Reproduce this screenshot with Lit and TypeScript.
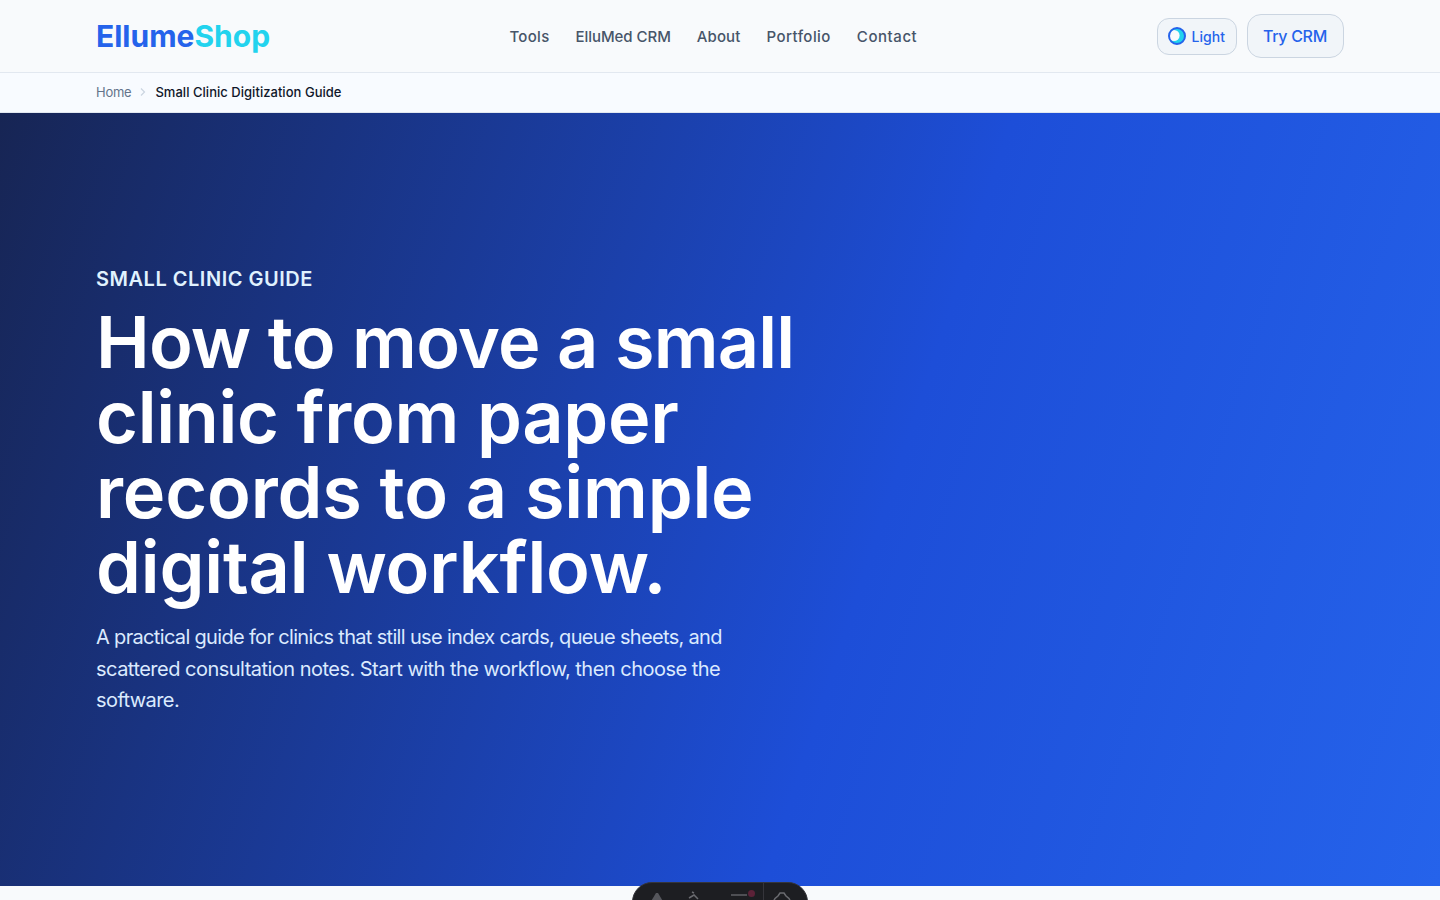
import { LitElement, html, css } from "lit";
import { customElement } from "lit/decorators.js";

@customElement("app-root")
export class AppRoot extends LitElement {
  static styles = css`
    :host { display: block; height: 900px; overflow: hidden; position: relative; background: #f8fafc; font-family: Inter, "Noto Sans", sans-serif; }
    .header { height: 73px; box-sizing: border-box; border-bottom: 1px solid #e2e8f0; padding: 0 96px; display: flex; justify-content: space-between; align-items: center; background: #f8fafc; }
    .logo { font-size: 30px; font-weight: 700; letter-spacing: 0; color: #2563eb; }
    .logo span { color: #22d3ee; }
    .nav { display: flex; gap: 26px; font-size: 15px; font-weight: 500; letter-spacing: 0.12px; color: #475569; }
    .nav span:nth-child(1) { letter-spacing: 0.3px; }
    .nav span:nth-child(2) { letter-spacing: -0.05px; }
    .nav span:nth-child(4) { letter-spacing: 0.45px; }
    .nav span:nth-child(5) { letter-spacing: 0.55px; }
    .actions { display: flex; align-items: center; gap: 10px; }
    .theme { height: 37px; box-sizing: border-box; display: flex; align-items: center; gap: 5px; padding: 0 11px 0 9px; border: 1px solid #cbd5e1; border-radius: 12px; background: #f1f5f9; color: #2563eb; font-size: 14px; font-weight: 500; }
    .cta { height: 44px; box-sizing: border-box; display: flex; align-items: center; padding: 0 16px 0 15px; border: 1px solid #cbd5e1; border-radius: 14px; background: #f1f5f9; color: #2563eb; font-size: 16px; font-weight: 500; letter-spacing: -0.3px; }
    .crumbs { height: 40px; box-sizing: border-box; border-bottom: 1px solid #e2e8f0; padding: 0 96px 2px; display: flex; align-items: center; gap: 5px; font-size: 13px; background: #f8fbff; }
    .crumbs .home { color: #64748b; letter-spacing: -0.25px; }
    .crumbs .cur { color: #0f172a; font-weight: 500; letter-spacing: 0.03px; }
    .hero { height: 773px; box-sizing: border-box; padding: 153px 96px 0; background: linear-gradient(108deg, #172554 0%, #1d4ed8 60%, #2563eb 100%); color: #fff; }
    .eyebrow { font-size: 20px; font-weight: 600; letter-spacing: 0.52px; color: #e0f2fe; line-height: 24px; padding-top: 1px; }
    h1 { margin: 13px 0 0; width: 760px; font-size: 72px; line-height: 75px; font-weight: 600; }
    h1 span { display: block; }
    h1 .a { letter-spacing: -0.8px; }
    h1 .b { letter-spacing: -0.29px; }
    h1 .c, h1 .d { letter-spacing: -0.17px; }
    p { margin: 18px 0 0; width: 660px; font-size: 20px; line-height: 31.5px; letter-spacing: -0.58px; color: #dbeafe; }
    p span { display: block; }
    p .a { letter-spacing: -0.67px; }
    p .b { letter-spacing: -0.52px; }
    .toolbar { position: absolute; left: 632px; top: 882px; width: 176px; height: 40px; box-sizing: border-box; border: 1px solid #35353b; border-radius: 20px; background: #1d1e22; }
    .toolbar svg { display: block; }
  `;
  render() {
    return html`
      <header class="header">
        <div class="logo">Ellume<span>Shop</span></div>
        <nav class="nav"><span>Tools</span><span>ElluMed CRM</span><span>About</span><span>Portfolio</span><span>Contact</span></nav>
        <div class="actions">
          <div class="theme">
            <svg width="20" height="20" viewBox="0 0 20 20"><circle cx="10" cy="10" r="8" fill="#22d3ee"/><circle cx="7" cy="9.5" r="5.6" fill="#f8fafc"/><circle cx="10" cy="10" r="8" fill="none" stroke="#2563eb" stroke-width="2"/></svg>
            <span>Light</span>
          </div>
          <div class="cta">Try CRM</div>
        </div>
      </header>
      <div class="crumbs">
        <span class="home">Home</span>
        <svg width="14" height="14" viewBox="0 0 14 14" fill="none" stroke="#cbd5e1" stroke-width="1.2"><path d="M5 3.5 8.5 7 5 10.5"/></svg>
        <span class="cur">Small Clinic Digitization Guide</span>
      </div>
      <section class="hero">
        <div class="eyebrow">SMALL CLINIC GUIDE</div>
        <h1><span class="a">How to move a small</span> <span class="b">clinic from paper</span> <span class="c">records to a simple</span> <span class="d">digital workflow.</span></h1>
        <p><span class="a">A practical guide for clinics that still use index cards, queue sheets, and</span> <span class="b">scattered consultation notes. Start with the workflow, then choose the</span> <span>software.</span></p>
      </section>
      <div class="toolbar">
        <svg width="174" height="38" viewBox="0 0 174 38" fill="none">
          <path d="M17 20 23 10h2l6 10" fill="#55565c"/>
          <path d="M56 15l5-3 4 4M59 9l2 1" stroke="#6a6b70" stroke-width="1.5"/>
          <path d="M98 12h16" stroke="#5f6066" stroke-width="1.5"/>
          <circle cx="118.5" cy="10.5" r="3.5" fill="#5c2238"/>
          <path d="M130.5 0v38" stroke="#35353b"/>
          <path d="M141 18c0-3 3-4 4-5l2-3h4l2 3c1 1 4 2 4 5" stroke="#6a6b70" stroke-width="1.5"/>
        </svg>
      </div>
    `;
  }
}
